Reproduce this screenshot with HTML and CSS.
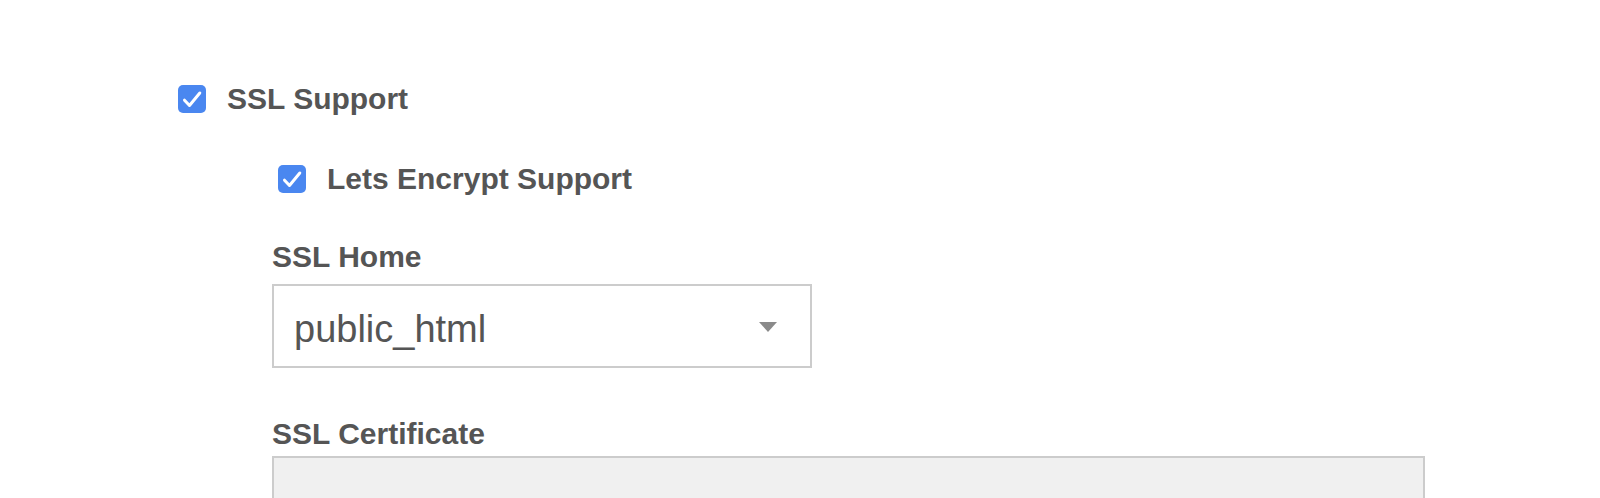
FILE: index.html
```html
<!DOCTYPE html>
<html lang="en">
<head>
  <meta charset="UTF-8" />
  <title>SSL Settings</title>
  <link rel="stylesheet" href="styles.css">
</head>
<body>
  <div class="container">
    <label class="check-row">
      <span class="check-box">
        <svg viewBox="0 0 28 28" width="28" height="28"><path d="M6.5 15.2l5 5.3L21.8 8" fill="none" stroke="#fff" stroke-width="3" stroke-linecap="round" stroke-linejoin="round"/></svg>
      </span>
      <span class="check-text">SSL Support</span>
    </label>

    <div class="sub-section">
      <label class="check-row sub-check">
        <span class="check-box">
          <svg viewBox="0 0 28 28" width="28" height="28"><path d="M6.5 15.2l5 5.3L21.8 8" fill="none" stroke="#fff" stroke-width="3" stroke-linecap="round" stroke-linejoin="round"/></svg>
        </span>
        <span class="check-text">Lets Encrypt Support</span>
      </label>

      <div class="field">
        <div class="field-label">SSL Home</div>
        <div class="select-box">
          <span class="select-value">public_html</span>
          <span class="select-arrow"></span>
        </div>
      </div>

      <div class="field field-cert">
        <div class="field-label">SSL Certificate</div>
        <div class="cert-box"></div>
      </div>
    </div>
  </div>
</body>
</html>
```

FILE: styles.css
```css
html, body {
  overflow: hidden;
}
body {
  margin: 0;
  font-family: "Liberation Sans", Arial, sans-serif;
  color: #555;
  background: #fff;
}
.container {
  padding: 85px 0 0 178px;
}
.check-row {
  display: flex;
  align-items: center;
  gap: 21px;
  height: 28px;
}
.check-box {
  width: 28px;
  height: 28px;
  border-radius: 5px;
  background: #4a87f0;
  display: block;
  flex: none;
}
.check-box svg {
  display: block;
}
.check-text {
  font-size: 30px;
  font-weight: bold;
  line-height: 28px;
}
.sub-section {
  padding-left: 94px;
  margin-top: 52px;
}
.sub-check {
  margin-left: 6px;
}
.field {
  margin-top: 47px;
}
.field-label {
  font-size: 30px;
  font-weight: bold;
  line-height: 34px;
  margin-bottom: 10px;
}
.field-cert {
  margin-top: 49px;
}
.field-cert .field-label {
  margin-bottom: 5px;
}
.select-box {
  box-sizing: border-box;
  width: 540px;
  height: 84px;
  border: 2px solid #ccc;
  display: flex;
  align-items: center;
  justify-content: space-between;
  padding: 0 33px 0 20px;
}
.select-value {
  font-size: 38px;
  line-height: 80px;
  padding-top: 6px;
}
.select-arrow {
  width: 0;
  height: 0;
  border-left: 9px solid transparent;
  border-right: 9px solid transparent;
  border-top: 10px solid #8a8a8a;
  margin-top: 2px;
}
.cert-box {
  box-sizing: border-box;
  width: 1153px;
  height: 200px;
  border: 2px solid #ccc;
  background: #f0f0f0;
}
```
